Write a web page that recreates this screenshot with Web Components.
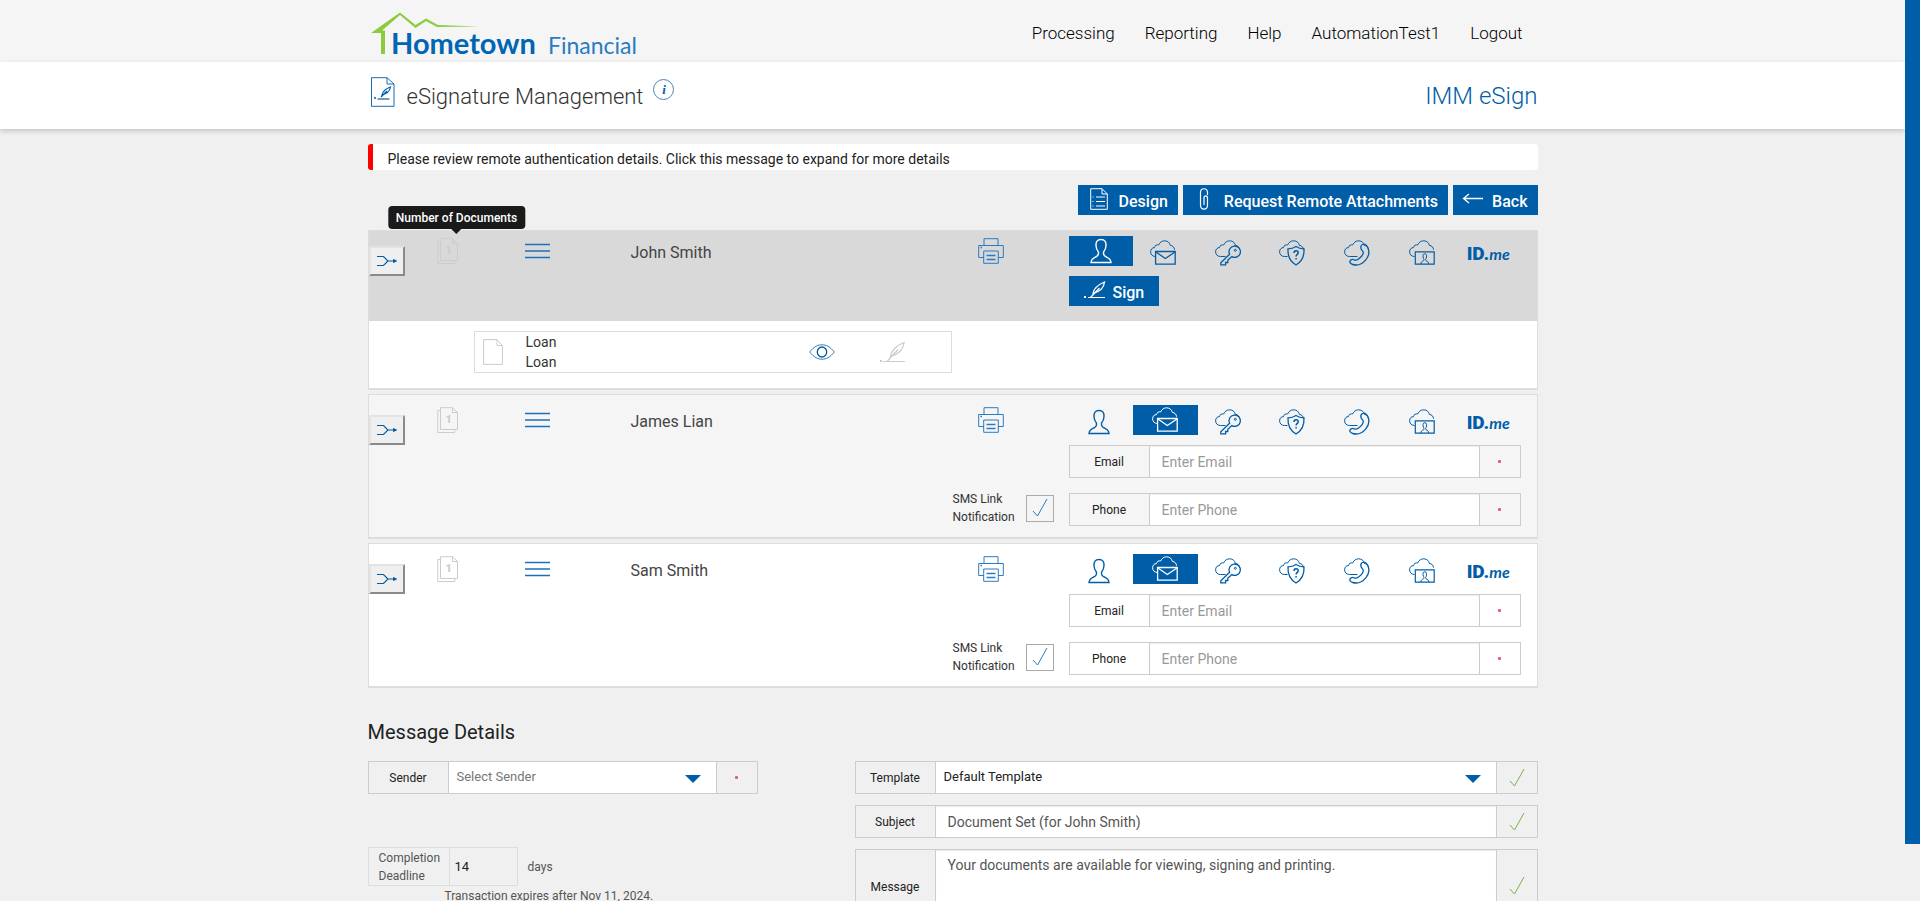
<!DOCTYPE html>
<html lang="en">
<head>
<meta charset="utf-8">
<meta name="viewport" content="width=device-width, initial-scale=1">
<title>eSignature Management</title>
<style>
  body {
    margin: 0;
    background: #f0f0f0;
    color: #333;
    font-family: Roboto, "Liberation Sans", sans-serif;
    font-size: 14px;
    line-height: 20px;
  }
</style>
</head>
<body>
<app-shell>
  <site-header></site-header>
  <title-bar product="IMM eSign">eSignature Management</title-bar>
  <page-container>
    <alert-bar>Please review remote authentication details. Click this message to expand for more details</alert-bar>
    <tool-bar>
      <action-button icon="design">Design</action-button>
      <action-button icon="clip">Request Remote Attachments</action-button>
      <action-button icon="back">Back</action-button>
    </tool-bar>
    <signer-card name="John Smith" method="in-person" open tip="Number of Documents">
      <document-row title="Loan" type="Loan"></document-row>
    </signer-card>
    <signer-card name="James Lian" method="email" shaded></signer-card>
    <signer-card name="Sam Smith" method="email"></signer-card>
    <message-details></message-details>
  </page-container>
</app-shell>

<script>
const CLOUD = 'M5.5 16.5C2.5 16.5.6 14.5.6 11.8.6 9 2.6 7.4 4.4 7.7 4.8 5.4 6.8 4.4 8.6 5 9.8 2.3 12 .8 14.6.8c3.4 0 5.3 2.2 5.8 4.7 2.2 0 4.1 1.8 4.1 4.2';

const ICONS = {
  'in-person': [26, 26, '<path d="M13 1.500C9.200 1.500 7.800 4 8 7.500c.1 2.600.6 4.500 2.400 6.500.6 2.600-.6 4-2.700 5C5 20.300 3.200 21 3 24.500h20c-.2-3.500-2-4.200-4.700-5.500-2.100-1-3.300-2.400-2.700-5 1.800-2 2.300-3.900 2.400-6.500.2-3.500-1.200-6-5-6z" stroke-width="1.400"/>'],
  email: [26, 26, `<path d="${CLOUD}"/><path d="M5.600 11.500h19.600v12.700H5.600z" stroke-width="1.300"/><path d="M6 12l9.300 6.500L25 12" stroke-width="1.300"/>`],
  key: [26, 26, `<path d="${CLOUD}M5.500 16.500h5"/><path d="M14.600 14.200 5.800 22.800v2h4.800v-2.300h2.200v-2.300l4-3.600a5.700 5.700 0 1 0-2.200-2.400z" stroke-width="1.300"/><circle cx="20.300" cy="10.300" r="1"/>`],
  question: [26, 26, `<path d="${CLOUD}M5.500 16.500h3"/><path d="M17 6.500c2.500 1.700 5 2.300 8 2.300.4 7-1.500 12.500-8 16.200-6.500-3.700-8.400-9.200-8-16.200 3 0 5.500-.6 8-2.300z" stroke-width="1.300"/><path d="M15 13c0-3 4.200-3 4.200-.3 0 1.800-2.100 1.700-2.100 3.800M17.100 18v1.500" stroke-width="1.500"/>`],
  phone: [26, 26, `<path d="${CLOUD}M5.500 16.500h8"/><path d="M18.500 4.500c2-.8 3.500-.2 4.800 2 2.500 4.500 1.700 9.500-1.500 13.300-3.500 4.200-8.400 6-13 4.700-2-.6-3.300-1.800-2.800-3.500.5-1.500 2.500-2 4.300-1.200 1.500.6 2.700.3 4.200-.8 2.500-1.800 4.700-4.500 4.800-6.500 0-1.500-1.600-2-2.200-3.800-.5-1.700 0-3.600 1.400-4.200z" stroke-width="1.300"/>`],
  video: [26, 26, `<path d="${CLOUD}"/><path d="M6.300 11.800h18.900v12.400H6.300z" stroke-width="1.200"/><path d="M12 24c0-2 .8-2.500 2.600-3.300.6-.6.500-1.300 0-2-1-2.200-.9-5 1.200-5s2.200 2.800 1.200 5c-.5.7-.6 1.400 0 2 1.800.8 2.600 1.300 2.600 3.300"/>`],
  print: [26, 26, '<path d="M6 7.500V.700h14v6.800M6 19.500H.700v-12h24.600v12H20"/><path d="M5.700 13h14.600v12.300H5.700z"/><path d="M8.500 17.500h9M8.500 21.500h9" stroke-width="1.500"/><path d="M2.500 9.500h1.500" stroke-width="1.500"/>'],
  docs: [22, 26, '<path d="M15.500.700H3.500v21.800h17V5.500zM15.500.700v4.800h5M3.500 3.500H.800v22h17v-3"/>'],
  doc: [20, 26, '<path d="M14 .600H.600v24.800h18.800V6.500zM14 .600v5.900h5.400"/>'],
  menu: [25, 16, '<path d="M0 1.500h25M0 8h25M0 14.500h25" stroke-width="1.500"/>'],
  merge: [20, 12, '<path d="M0 1.500h6.500L11 6l-4.500 4.500H0M11 6h6" stroke-width="1.200"/><path d="M16.500 4.500v3l3-1.500z" fill="currentColor" stroke-width="1"/>'],
  eye: [26, 16, '<path d="M.7 8C5 2.500 9 .800 13 .800S21 2.500 25.300 8C21 13.500 17 15.200 13 15.200S5 13.500.700 8z" stroke-width=".8"/><ellipse cx="13" cy="8" rx="4.700" ry="5" stroke-width="1.300"/>'],
  quill: [26, 22, '<path d="M11.500 15.500C12 10 17.500 4.500 25 1.500c-.5 6-5 11.500-13.500 14zM8.500 20 19 8.500" stroke-width="1.300"/><path d="M4 20.500h22"/><path d="M1 19h2v2H1z" fill="currentColor" stroke="none"/>'],
  sign: [21, 18, '<path d="M9 12.500C9.500 8 13.500 4 20.500 1c-.5 5-4 9.500-11.500 11.500zM6.500 16.500 15.500 7" stroke-width="1.300"/><path d="M4 16.500h17"/><path d="M0 15h2v2H0z" fill="currentColor" stroke="none"/>'],
  design: [18, 22, '<path d="M12 .700H.700v20.600h16.600V6zM12 .700V6h5.300M6 9h9M6 13.500h9M6 18h9M3 8.500v1M3 13v1M3 17.500v1"/>'],
  clip: [18, 22, '<path d="M12.500 7V4.500c0-5-7-5-7 0V17c0 5.500 7 5.500 7 0V10c0-2.800-3.500-2.800-3.500 0v7" stroke-width="1.200"/>'],
  back: [16, 22, '<path d="M18 10.500H-1M4 6l-5.500 4.500L4 15" stroke-width="1.300"/>'],
  check: [16, 20, '<path d="M1 13l4.500 5L15 1"/>'],
  caret: [16, 8, '<path d="M0 0h16L8 8z" fill="currentColor" stroke="none"/>'],
  signature: [25, 30, '<path d="M17 .700H1.500v28.600h22.500V7zM17 .700V7h7" stroke-width=".9"/><path d="M12 18c1-4 4-6.500 8.500-8-.8 4-3.500 7-8.500 8zM11 20l6-6" fill="none" stroke-width="1.200"/><path d="M7.500 22h12" stroke-width="1.200"/><path d="M4 21h2" stroke-width="1.500"/>']
};

// Shared helper: clones a template into an open shadow root
class BaseElement extends HTMLElement {
  connectedCallback() {
    if (this.shadowRoot) return;
    const root = this.attachShadow({ mode: 'open' });
    const template = document.createElement('template');
    template.innerHTML = `<style>:host, *, *::before, *::after { box-sizing: border-box; }</style>${this.render()}`;
    root.appendChild(template.content.cloneNode(true));
  }

  attr(name, fallback = '') {
    return this.getAttribute(name) || fallback;
  }
}

class UiIcon extends BaseElement {
  render() {
    const [w, h, body] = ICONS[this.attr('name')];
    return `
      <style>
        :host { display: inline-block; flex: none; line-height: 0; }
        svg { display: block; overflow: visible; fill: none; stroke: currentColor; stroke-width: 1; }
      </style>
      <svg width="${w}" height="${h}" viewBox="0 0 ${w} ${h}" aria-hidden="true">${body}</svg>
    `;
  }
}

class AppShell extends BaseElement {
  render() {
    return `
      <style>
        :host { display: grid; grid-template-columns: minmax(0, 1fr) 15px; height: 100vh; }
        main { overflow-y: auto; scrollbar-width: none; }
        .thumb { height: 844px; max-height: 94%; background: #005da8; }
      </style>
      <main><slot></slot></main>
      <div class="track"><div class="thumb"></div></div>
    `;
  }
}

class PageContainer extends BaseElement {
  render() {
    return `
      <style>
        :host { display: block; max-width: 1170px; margin: 15px auto 40px; }
      </style>
      <slot></slot>
    `;
  }
}

class SiteHeader extends BaseElement {
  render() {
    const links = ['Processing', 'Reporting', 'Help', 'AutomationTest1', 'Logout'];
    return `
      <style>
        :host { display: block; background: #f5f5f5; }
        .inner { display: flex; justify-content: space-between; align-items: center; max-width: 1170px; height: 62px; margin: 0 auto; }
        .logo { display: block; }
        .logo text { font-family: Lato, sans-serif; }
        nav { display: flex; gap: 30px; padding: 4px 15px 0 0; }
        a { color: #000; font-size: 17px; font-weight: 300; line-height: 24px; text-decoration: none; }
      </style>
      <div class="inner">
        <a href="#" aria-label="Hometown Financial">
          <svg class="logo" width="280" height="62" viewBox="0 0 280 62">
            <path d="M3 33 32 12.500 47.500 25 58 18.500 70 25l41 1.500L69 27 58 21 47.500 28 32 15 14 30.500h3V54h-4V33z" fill="#8ccb3f"/>
            <text x="23" y="54" font-size="29" font-weight="700" fill="#0065b3">Hometown</text>
            <text x="180" y="54" font-size="23" font-weight="400" fill="#2a7bc0">Financial</text>
          </svg>
        </a>
        <nav>${links.map(l => `<a href="#">${l}</a>`).join('')}</nav>
      </div>
    `;
  }
}

class TitleBar extends BaseElement {
  render() {
    return `
      <style>
        :host { display: block; position: relative; background: #fff; box-shadow: 0 2px 5px rgba(0, 0, 0, .18); }
        .inner { display: flex; align-items: flex-start; max-width: 1170px; height: 67px; margin: 0 auto; padding-top: 15px; }
        ui-icon { margin-left: 2px; color: #005da8; }
        h1 { margin: 4px 10px 0 12px; font-size: 22px; font-weight: 300; line-height: 32px; color: #333; }
        .info { width: 21px; height: 21px; margin-top: 2px; padding: 0; border: 1px solid #4a85b8; border-radius: 50%; background: none; color: #005da8; font: italic bold 13px/18px "Liberation Serif", serif; }
        .product { margin-top: 3px; margin-left: auto; font-size: 24px; font-weight: 300; line-height: 32px; color: #005da8; }
      </style>
      <div class="inner">
        <ui-icon name="signature"></ui-icon>
        <h1><slot></slot></h1>
        <button class="info" type="button" aria-label="Information">i</button>
        <div class="product">${this.attr('product')}</div>
      </div>
    `;
  }
}

class AlertBar extends BaseElement {
  render() {
    return `
      <style>
        :host { display: block; }
        button { display: block; width: 100%; padding: 5px 15px 1px; border: 0; border-left: 5px solid #f00; border-radius: 3px; background: #fff; color: #222; font: inherit; text-align: left; }
      </style>
      <button type="button"><slot></slot></button>
    `;
  }
}

class ToolBar extends BaseElement {
  render() {
    return `
      <style>
        :host { display: flex; justify-content: flex-end; gap: 5px; margin: 15px 0; }
      </style>
      <slot></slot>
    `;
  }
}

class ActionButton extends BaseElement {
  render() {
    return `
      <style>
        :host { display: inline-block; }
        button { display: flex; align-items: center; gap: 11px; height: 30px; padding: 0 10px 2px 12px; border: 0; background: #005da8; color: #fff; font: 500 16px/20px Roboto, sans-serif; }
        :host([roomy]) button { gap: 8px; padding: 0 15px 2px; }
        span { padding-top: 6px; }
      </style>
      <button type="button"><ui-icon name="${this.attr('icon')}"></ui-icon><span><slot></slot></span></button>
    `;
  }
}

class AuthMethods extends BaseElement {
  render() {
    const methods = [
      ['in-person', 'In person'], ['email', 'Email'], ['key', 'Password'],
      ['question', 'Security questions'], ['phone', 'Phone'], ['video', 'Video'], ['idme', 'ID.me']
    ];
    const selected = this.attr('selected');
    const cells = methods.map(([id, label]) => `
      <button class="${id}" type="button" aria-label="${label}" aria-pressed="${id === selected}">
        ${id === 'idme' ? '<b>ID.</b><i>me</i>' : `<ui-icon name="${id}"></ui-icon>`}
      </button>`);
    return `
      <style>
        :host { display: grid; grid-template-columns: repeat(7, 1fr); }
        button { display: flex; justify-content: center; align-items: center; height: 30px; padding: 4px 4px 0 0; border: 0; background: none; color: #005da8; font-size: 19px; line-height: 20px; }
        button[aria-pressed="true"] { padding: 0; background: #005da8; color: #fff; }
        .idme { align-items: baseline; padding: 8px 0 0; }
        b { font-family: Roboto, sans-serif; font-weight: 900; }
        i { font-family: Lato, sans-serif; font-size: 16px; font-weight: 700; }
      </style>
      ${cells.join('')}
    `;
  }
}

class FormField extends BaseElement {
  control() {
    const value = this.attr('value');
    switch (this.attr('kind', 'text')) {
      case 'select':
        return `
          <div class="pick">
            <select id="field" class="${this.hasAttribute('muted') ? 'muted' : ''}"><option>${value}</option></select>
            <ui-icon name="caret"></ui-icon>
          </div>`;
      case 'textarea':
        return `<textarea id="field">${value}</textarea>`;
      default:
        return `<input id="field" type="text" value="${value}" placeholder="${this.attr('placeholder')}">`;
    }
  }

  render() {
    const mark = this.attr('mark') === 'ok' ? '<ui-icon name="check"></ui-icon>' : '<span class="dot"></span>';
    return `
      <style>
        :host { display: grid; grid-template-columns: 79px minmax(0, 1fr) 40px; min-height: 33px; border: 1px solid #ccc; }
        label { display: flex; justify-content: center; align-items: center; padding-top: 1px; color: #222; font-size: 12px; }
        input, select, textarea { display: block; width: 100%; height: 100%; margin: 0; padding: 0 12px; border: 0; border-left: 1px solid #ccc; border-right: 1px solid #ccc; border-radius: 0; background: #fff; color: #555; font: inherit; }
        input, textarea { box-shadow: inset 0 1px 1px rgba(0, 0, 0, .08); }
        textarea { height: 72px; padding-top: 5px; resize: none; }
        ::placeholder { color: #999; opacity: 1; }
        .pick { display: grid; align-items: center; }
        .pick > * { grid-area: 1 / 1; }
        select { appearance: none; padding: 0 8px 1px; color: #222; font-size: 13px; }
        select.muted { color: #777; }
        .pick ui-icon { justify-self: end; margin: 2px 16px 0 0; color: #005da8; pointer-events: none; }
        .mark { display: flex; justify-content: center; align-items: center; color: #7fb04a; }
        .dot { width: 3px; height: 3px; border-radius: 1px; background: #e0606c; }
      </style>
      <label for="field">${this.attr('label')}</label>
      ${this.control()}
      <div class="mark">${mark}</div>
    `;
  }
}

class SmsOption extends BaseElement {
  render() {
    return `
      <style>
        :host { display: flex; justify-content: space-between; align-items: center; font-size: 12px; line-height: 18px; }
        .box { display: grid; place-items: center; width: 28px; height: 27px; }
        .box > * { grid-area: 1 / 1; }
        input { appearance: none; width: 100%; height: 100%; margin: 0; border: 1px solid #aaa; background: none; }
        ui-icon { color: #2a7bc0; pointer-events: none; }
      </style>
      <label for="sms">SMS Link<br>Notification</label>
      <div class="box"><input id="sms" type="checkbox" checked><ui-icon name="check"></ui-icon></div>
    `;
  }
}

class DocumentRow extends BaseElement {
  render() {
    return `
      <style>
        :host { display: grid; grid-template-columns: 43px minmax(0, 1fr) 70px 72px; align-items: center; width: 478px; max-width: 100%; padding: 0 0 0 8px; border: 1px solid #ddd; background: #fff; }
        p { margin: 0; }
        button { display: flex; padding: 0; border: 0; background: none; color: #005da8; }
        .off { color: #ccc; }
      </style>
      <ui-icon name="doc" class="off"></ui-icon>
      <div><p>${this.attr('title')}</p><p>${this.attr('type')}</p></div>
      <button type="button" aria-label="View"><ui-icon name="eye"></ui-icon></button>
      <button type="button" class="off" aria-label="Sign"><ui-icon name="quill"></ui-icon></button>
    `;
  }
}

class SignerCard extends BaseElement {
  render() {
    const remote = this.attr('method') === 'email';
    const tip = this.attr('tip');
    const details = remote
      ? `<sms-option></sms-option>
         <div class="fields">
           <form-field label="Email" placeholder="Enter Email"></form-field>
           <form-field label="Phone" placeholder="Enter Phone"></form-field>
         </div>`
      : '<div class="fields"><action-button icon="sign" roomy>Sign</action-button></div>';
    return `
      <style>
        :host { display: block; margin-bottom: 4px; border: 1px solid #ddd; border-bottom-width: 2px; background: #fff; }
        :host([shaded]) { background: #f5f5f5; }
        .head { display: grid; grid-template-columns: 68px 88px 106px minmax(0, 1fr) 101px 15px 452px 16px; align-items: start; padding: 10px 0 11px; }
        :host([open]) .head { padding: 5px 0 15px; background: #d9d9d9; }
        button { display: grid; place-items: center; padding: 0; border: 0; background: none; }
        .merge { width: 36px; height: 30px; margin-top: 10px; border: 2px solid; border-color: #e3e3e3 #8a8a8a #8a8a8a #e3e3e3; background: #efefef; color: #005da8; grid-row: 1 / 3; }
        .count { position: relative; display: grid; justify-content: start; margin-top: 2px; color: #ccc; font-size: 11px; font-weight: 900; }
        .count > * { grid-area: 1 / 1; }
        .count b { padding: 3px 0 0 9px; }
        .tip { position: absolute; bottom: 35px; left: 20px; padding: 2px 8px 1px; transform: translateX(-50%); border-radius: 4px; background: #1a1a1a; color: #fff; font-size: 12px; font-weight: 500; white-space: nowrap; }
        .tip::after { content: ""; position: absolute; top: 100%; left: 50%; margin-left: -5px; border: 5px solid transparent; border-top-color: #1a1a1a; border-bottom: 0; }
        .menu { margin-top: 7px; color: #1f6fb8; justify-self: start; }
        .name { margin-top: 7px; font-size: 16px; color: #444; }
        .print { margin: 2px 0 0 25px; color: #2a7bc0; justify-self: start; }
        auth-methods { grid-column: 7; }
        sms-option { grid-column: 5; margin-top: 55px; }
        .fields { display: grid; grid-column: 7; gap: 15px; margin-top: 10px; }
        .body { padding: 10px 14px 15px 105px; }
      </style>
      <div class="head">
        <button class="merge" type="button" aria-label="Merge signer"><ui-icon name="merge"></ui-icon></button>
        <div class="count"><ui-icon name="docs"></ui-icon><b>1</b>${tip ? `<span class="tip">${tip}</span>` : ''}</div>
        <button class="menu" type="button" aria-label="Reorder"><ui-icon name="menu"></ui-icon></button>
        <div class="name">${this.attr('name')}</div>
        <button class="print" type="button" aria-label="Print"><ui-icon name="print"></ui-icon></button>
        <auth-methods selected="${this.attr('method')}"></auth-methods>
        ${details}
      </div>
      ${this.hasAttribute('open') ? '<div class="body"><slot></slot></div>' : ''}
    `;
  }
}

class MessageDetails extends BaseElement {
  render() {
    return `
      <style>
        :host { display: block; margin-top: 31px; }
        h2 { margin: 0 0 16px; color: #222; font-size: 20px; font-weight: 400; line-height: 26px; }
        .columns { display: grid; grid-template-columns: 390px minmax(0, 683px); justify-content: space-between; }
        .right { display: grid; gap: 11px; }
        .deadline { display: flex; align-items: center; gap: 10px; margin-top: 53px; color: #555; font-size: 12px; }
        .group { display: grid; grid-template-columns: 80px 68px; border: 1px solid #ddd; }
        label { padding: 1px 0 0 10px; line-height: 18px; }
        input { width: 100%; padding: 0 5px; border: 0; border-left: 1px solid #ddd; background: none; color: #222; font: inherit; font-size: 13px; }
        .expires { margin: 0 0 0 77px; color: #555; font-size: 12px; }
      </style>
      <h2>Message Details</h2>
      <div class="columns">
        <div>
          <form-field kind="select" label="Sender" value="Select Sender" muted></form-field>
          <div class="deadline">
            <div class="group">
              <label for="days">Completion<br>Deadline</label>
              <input id="days" type="text" value="14">
            </div>
            <span>days</span>
          </div>
          <p class="expires">Transaction expires after Nov 11, 2024.</p>
        </div>
        <div class="right">
          <form-field kind="select" label="Template" value="Default Template" mark="ok"></form-field>
          <form-field label="Subject" value="Document Set (for John Smith)" mark="ok"></form-field>
          <form-field kind="textarea" label="Message" value="Your documents are available for viewing, signing and printing." mark="ok"></form-field>
        </div>
      </div>
    `;
  }
}

customElements.define('ui-icon', UiIcon);
customElements.define('app-shell', AppShell);
customElements.define('page-container', PageContainer);
customElements.define('site-header', SiteHeader);
customElements.define('title-bar', TitleBar);
customElements.define('alert-bar', AlertBar);
customElements.define('tool-bar', ToolBar);
customElements.define('action-button', ActionButton);
customElements.define('auth-methods', AuthMethods);
customElements.define('form-field', FormField);
customElements.define('sms-option', SmsOption);
customElements.define('document-row', DocumentRow);
customElements.define('signer-card', SignerCard);
customElements.define('message-details', MessageDetails);
</script>
</body>
</html>
